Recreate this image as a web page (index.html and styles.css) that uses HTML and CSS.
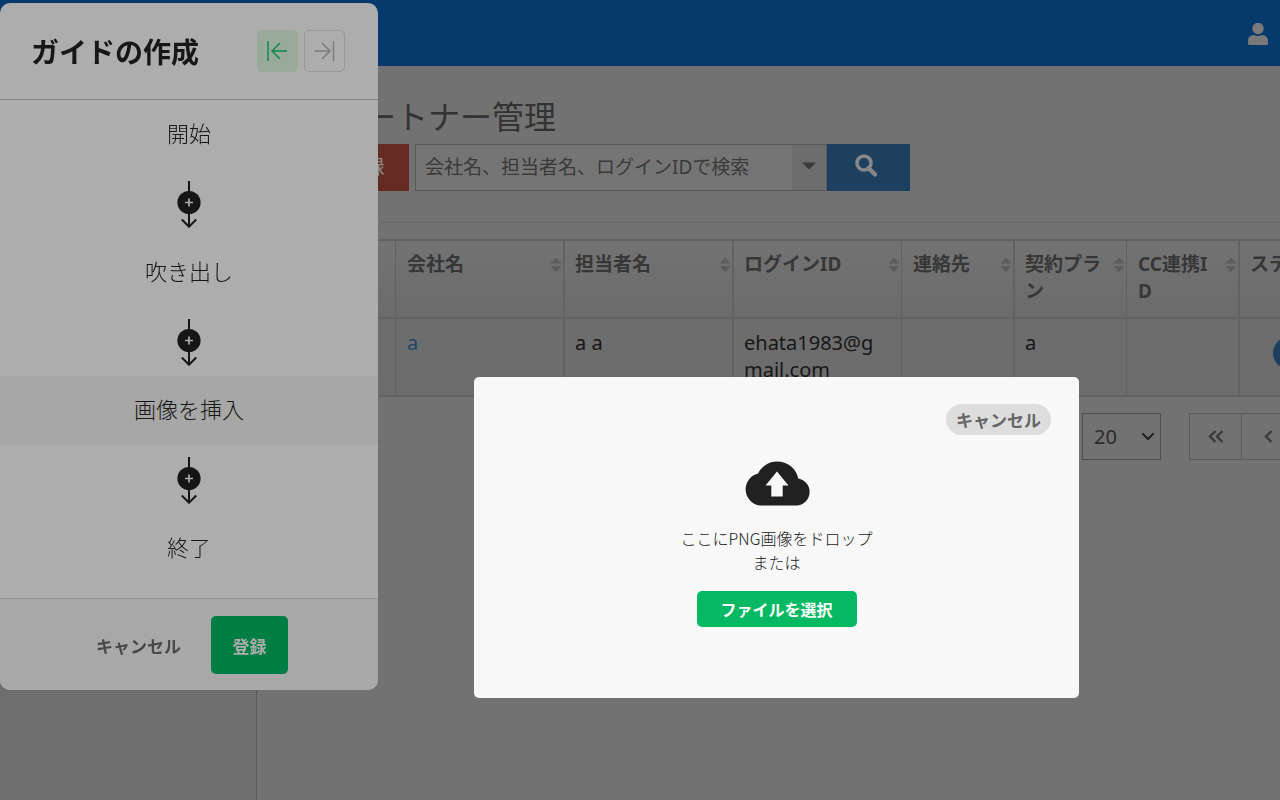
FILE: index.html
```html
<!DOCTYPE html>
<html lang="ja">
<head>
<meta charset="utf-8">
<title>パートナー管理</title>
<link rel="stylesheet" href="styles.css">
</head>
<body>
<svg class="sprite" aria-hidden="true">
  <symbol id="connector" viewBox="0 0 26 48">
    <path d="M13 1V47M5.800 39.500 13 46.700 20.200 39.500" fill="none" stroke="#161616" stroke-width="2"/>
    <circle cx="13" cy="22.500" r="11.600" fill="#161616"/>
    <path d="M13 18.500v8M9 22.500h8" stroke="#adadad" stroke-width="1.700"/>
  </symbol>
  <symbol id="sort" viewBox="0 0 12 16">
    <path d="M6 0.500 11.500 6.500H0.500zM6 15 11.500 9H0.500z" fill="#5c5c5c"/>
  </symbol>
</svg>

<div class="app">
  <header class="topbar">
    <button class="user" type="button" aria-label="アカウント">
      <svg width="20" height="22" viewBox="0 0 20 22"><circle cx="10" cy="5.500" r="5.700" fill="#797979"/><path d="M0 22V18.500Q0 12 6 12Q10 14 14 12Q20 12 20 18.500V20.500Q20 22 18.500 22H1.500Q0 22 0 20.500z" fill="#797979"/></svg>
    </button>
  </header>
  <div class="body">
    <nav class="sidebar"></nav>
    <main class="main">
      <h1 class="heading">パートナー管理</h1>
      <div class="toolbar">
        <button class="add" type="button">新規登録</button>
        <div class="search">
          <input class="search-input" type="text" aria-label="検索" placeholder="会社名、担当者名、ログインIDで検索">
          <button class="search-menu" type="button" aria-label="検索条件"><svg width="14" height="8" viewBox="0 0 14 8"><path d="M0 0.500H14L7 7.500z" fill="#3a3a3a"/></svg></button>
          <button class="search-go" type="button" aria-label="検索"><svg width="22" height="23" viewBox="0 0 22 23"><circle cx="9" cy="9" r="7" fill="none" stroke="#878787" stroke-width="3.600"/><path d="M13.500 14 20 20.500" stroke="#878787" stroke-width="4.400" stroke-linecap="round"/></svg></button>
        </div>
      </div>
      <table class="table">
        <colgroup><col class="c-first"><col class="c-company"><col class="c-wide"><col class="c-wide"><col class="c-narrow"><col class="c-plan"><col class="c-narrow"><col></colgroup>
        <thead>
          <tr>
            <th></th>
            <th>会社名<svg class="sort"><use href="#sort"/></svg></th>
            <th class="edge">担当者名<svg class="sort"><use href="#sort"/></svg></th>
            <th class="edge">ログインID<svg class="sort"><use href="#sort"/></svg></th>
            <th>連絡先<svg class="sort"><use href="#sort"/></svg></th>
            <th class="edge">契約プラン<svg class="sort"><use href="#sort"/></svg></th>
            <th>CC連携ID<svg class="sort"><use href="#sort"/></svg></th>
            <th class="edge clip">ステータス</th>
          </tr>
        </thead>
        <tbody>
          <tr>
            <td></td>
            <td><a class="link" href="#">a</a></td>
            <td class="edge">a a</td>
            <td class="edge">ehata1983@gmail.com</td>
            <td></td>
            <td class="edge">a</td>
            <td></td>
            <td class="edge clip"><span class="pill"></span></td>
          </tr>
        </tbody>
      </table>
      <div class="pager">
        <div class="pager-group">
          <div class="size">
            <select class="size-select" aria-label="表示件数"><option>20</option></select>
            <svg class="size-arrow" width="14" height="9" viewBox="0 0 14 9"><path d="M1.500 1.500 7 7 12.500 1.500" fill="none" stroke="#1f1f1f" stroke-width="2"/></svg>
          </div>
          <div class="pages">
            <button class="page" type="button" aria-label="最初"><svg width="16" height="13" viewBox="0 0 16 13"><path d="M7.500 1 2 6.500 7.500 12M14.500 1 9 6.500 14.500 12" fill="none" stroke="#3b3b3b" stroke-width="2.400"/></svg></button>
            <button class="page" type="button" aria-label="前へ"><svg width="9" height="13" viewBox="0 0 9 13"><path d="M7.500 1 2 6.500 7.500 12" fill="none" stroke="#3b3b3b" stroke-width="2.400"/></svg></button>
          </div>
        </div>
      </div>
    </main>
  </div>
</div>

<aside class="guide">
  <div class="guide-head">
    <h2 class="guide-title">ガイドの作成</h2>
    <div class="guide-sides">
      <button class="side side-on" type="button" aria-label="左に寄せる"><svg width="23" height="22" viewBox="0 0 23 22" fill="none" stroke="#0b8a4e" stroke-width="1.500"><path d="M2 1V21M21 11H6M14 3 6 11 14 19"/></svg></button>
      <button class="side" type="button" aria-label="右に寄せる"><svg width="22" height="22" viewBox="0 0 22 22" fill="none" stroke="#7c7c7c" stroke-width="1.500"><path d="M19.500 1V21M1 11H16M8 3 16 11 8 19"/></svg></button>
    </div>
  </div>
  <div class="steps">
    <div class="step">開始</div>
    <button class="connector" type="button" aria-label="追加"><svg width="26" height="48"><use href="#connector"/></svg></button>
    <div class="step">吹き出し</div>
    <button class="connector" type="button" aria-label="追加"><svg width="26" height="48"><use href="#connector"/></svg></button>
    <div class="step step-on">画像を挿入</div>
    <button class="connector" type="button" aria-label="追加"><svg width="26" height="48"><use href="#connector"/></svg></button>
    <div class="step">終了</div>
  </div>
  <div class="guide-foot">
    <button class="cancel" type="button">キャンセル</button>
    <button class="submit" type="button">登録</button>
  </div>
</aside>

<section class="upload" role="dialog" aria-label="画像を挿入">
  <button class="upload-cancel" type="button">キャンセル</button>
  <svg class="cloud" width="66" height="45" viewBox="0 0 66 45"><path d="M16 44.500A16.300 16.300 0 0 1 14 12.500C18 5 25 0.500 33 0.500C43.500 0.500 52.500 7.500 54.300 17.500A13.600 13.600 0 0 1 52.500 44.500z" fill="#212121"/><path d="M33 10.500 44.500 24.500H38.700V35.500H27.300V24.500H21.500z" fill="#f8f8f8"/></svg>
  <p class="upload-text">ここにPNG画像をドロップ<br>または</p>
  <button class="upload-pick" type="button">ファイルを選択</button>
</section>
</body>
</html>
```

FILE: styles.css
```css
* { box-sizing: border-box; }

body {
  margin: 0;
  height: 100vh;
  overflow: hidden;
  background: #727272;
  font-family: "Noto Sans", "Noto Sans CJK JP", sans-serif;
  font-size: 19px;
  line-height: 27px;
  color: #171717;
}

button, input, select {
  margin: 0;
  padding: 0;
  border: 0;
  background: none;
  font: inherit;
  color: inherit;
}

svg { display: block; }
.sprite { position: absolute; width: 0; height: 0; }

/* Page behind the dialog */
.app { display: flex; flex-direction: column; height: 100vh; }
.topbar {
  display: flex;
  align-items: center;
  justify-content: flex-end;
  flex: none;
  height: 66px;
  padding: 2px 12px 0 0;
  background: #063a6d;
}
.body { display: flex; flex: 1; min-height: 0; }
.sidebar { flex: none; width: 257px; background: #6e6e6e; border-right: 1px solid #5c5c5c; }
.main { flex: 1; min-width: 0; overflow: hidden; padding: 26px 0 0 19px; }

.heading {
  margin: 0;
  padding-left: 56px;
  font-size: 32px;
  line-height: 46px;
  font-weight: 400;
  font-family: "Noto Sans CJK JP", sans-serif;
  color: #333;
}

.toolbar {
  display: flex;
  gap: 6px;
  margin-top: 6px;
  padding-bottom: 31px;
  border-bottom: 1px dotted #606060;
}
.add { width: 133px; height: 47px; padding-left: 8px; background: #632b22; color: #8a8a8a; }
.search { display: flex; width: 495px; height: 47px; }
.search-input {
  flex: 1;
  min-width: 0;
  padding: 0 9px;
  border: 1px solid #5a5a5a;
  border-right: 0;
  background: #757575;
}
.search-input::placeholder { color: #3a3a3a; opacity: 1; }
.search-menu {
  display: flex;
  align-items: center;
  justify-content: center;
  width: 35px;
  padding-bottom: 4px;
  background: #6d6d6d;
  border: 1px solid #5a5a5a;
  border-left: 0;
}
.search-go { display: flex; align-items: center; justify-content: center; width: 83px; padding: 0 6px 4px 0; background: #1e405f; }

.table { width: 100%; margin-top: 16px; table-layout: fixed; border-collapse: separate; border-spacing: 0; border-top: 2px solid #626262; }
.c-first { width: 119px; }
.c-company { width: 168px; }
.c-wide { width: 169px; }
.c-narrow { width: 112px; }
.c-plan { width: 113px; }
.table th, .table td {
  position: relative;
  height: 78px;
  padding: 10px 24px 10px 11px;
  border-left: 1px solid #626262;
  border-bottom: 2px solid #626262;
  text-align: left;
  vertical-align: top;
  word-break: break-all;
}
.table th { background: linear-gradient(#737373, #6b6b6b); color: #373737; font-weight: 700; }
.table td { padding-right: 20px; background: #6d6d6d; font-size: 20px; }
.table .edge { border-left-width: 2px; padding-left: 10px; }
.table .clip { padding-right: 0; overflow: hidden; white-space: nowrap; }
.sort { position: absolute; top: 16px; right: 1px; width: 12px; height: 16px; }
.link { color: #1e4568; text-decoration: none; }
.pill { display: block; width: 60px; height: 32px; margin: 8px 0 0 23px; border-radius: 16px; background: #1e405f; }

.pager { display: flex; justify-content: flex-end; margin-top: 16px; }
.pager-group { display: flex; gap: 28px; width: 198px; overflow: hidden; }
.size { position: relative; flex: none; }
.size-select { width: 79px; height: 47px; padding: 0 11px; border: 1px solid #505050; appearance: none; font-size: 20px; color: #2c2c2c; }
.size-arrow { position: absolute; top: 19px; right: 6px; pointer-events: none; }
.pages { display: flex; flex: none; border: 1px solid #5c5c5c; }
.page { display: flex; align-items: center; justify-content: center; width: 51px; height: 45px; padding-bottom: 1px; }
.page + .page { width: 53px; border-left: 1px solid #5c5c5c; }

/* Guide panel */
.guide {
  position: fixed;
  top: 3px;
  left: 0;
  width: 378px;
  overflow: hidden;
  border-radius: 10px;
  background: #adadad;
  font-family: "Noto Sans CJK JP", sans-serif;
}
.guide-head {
  display: flex;
  align-items: center;
  justify-content: space-between;
  height: 97px;
  padding: 0 33px 0 31px;
  border-bottom: 1px solid #868686;
}
.guide-title { margin: 0; font-size: 28px; line-height: 40px; font-weight: 700; }
.guide-sides { display: flex; gap: 6px; }
.side {
  display: flex;
  align-items: center;
  justify-content: center;
  width: 41px;
  height: 42px;
  border: 1px solid #999;
  border-radius: 5px;
}
.side-on { background: #9aaa9a; border-color: #9aaa9a; }
.steps { display: flex; flex-direction: column; padding-bottom: 15px; }
.step { padding: 16px 0 20px; font-size: 22px; line-height: 33px; font-weight: 300; text-align: center; }
.step-on { background: #a7a7a7; }
.connector { display: flex; align-items: center; justify-content: center; height: 69px; }
.guide-foot {
  display: flex;
  align-items: center;
  gap: 30px;
  padding: 17px 90px 16px 96px;
  border-top: 1px solid #949494;
  background: #a8a8a8;
  font-size: 17px;
  font-weight: 700;
}
.cancel { color: #484848; }
.submit { width: 77px; height: 58px; border-radius: 5px; background: #007d43; color: #adadad; }

/* Upload dialog */
.upload {
  position: fixed;
  top: 377px;
  left: 474px;
  right: 201px;
  display: flex;
  flex-direction: column;
  align-items: center;
  padding: 27px 28px 71px;
  border-radius: 5px;
  background: #f8f8f8;
  color: #212121;
  font-size: 16px;
  line-height: 24px;
  font-family: "Noto Sans CJK JP", sans-serif;
}
.upload-cancel {
  align-self: flex-end;
  height: 31px;
  padding: 0 10px;
  border-radius: 16px;
  background: #ddd;
  color: #666;
  font-size: 17px;
  font-weight: 700;
}
.cloud { margin-top: 26px; overflow: visible; }
.upload-text { margin: 20px 0 17px; font-weight: 300; text-align: center; }
.upload-pick { width: 160px; height: 36px; border-radius: 5px; background: #04b962; color: #fff; font-weight: 700; }
```
